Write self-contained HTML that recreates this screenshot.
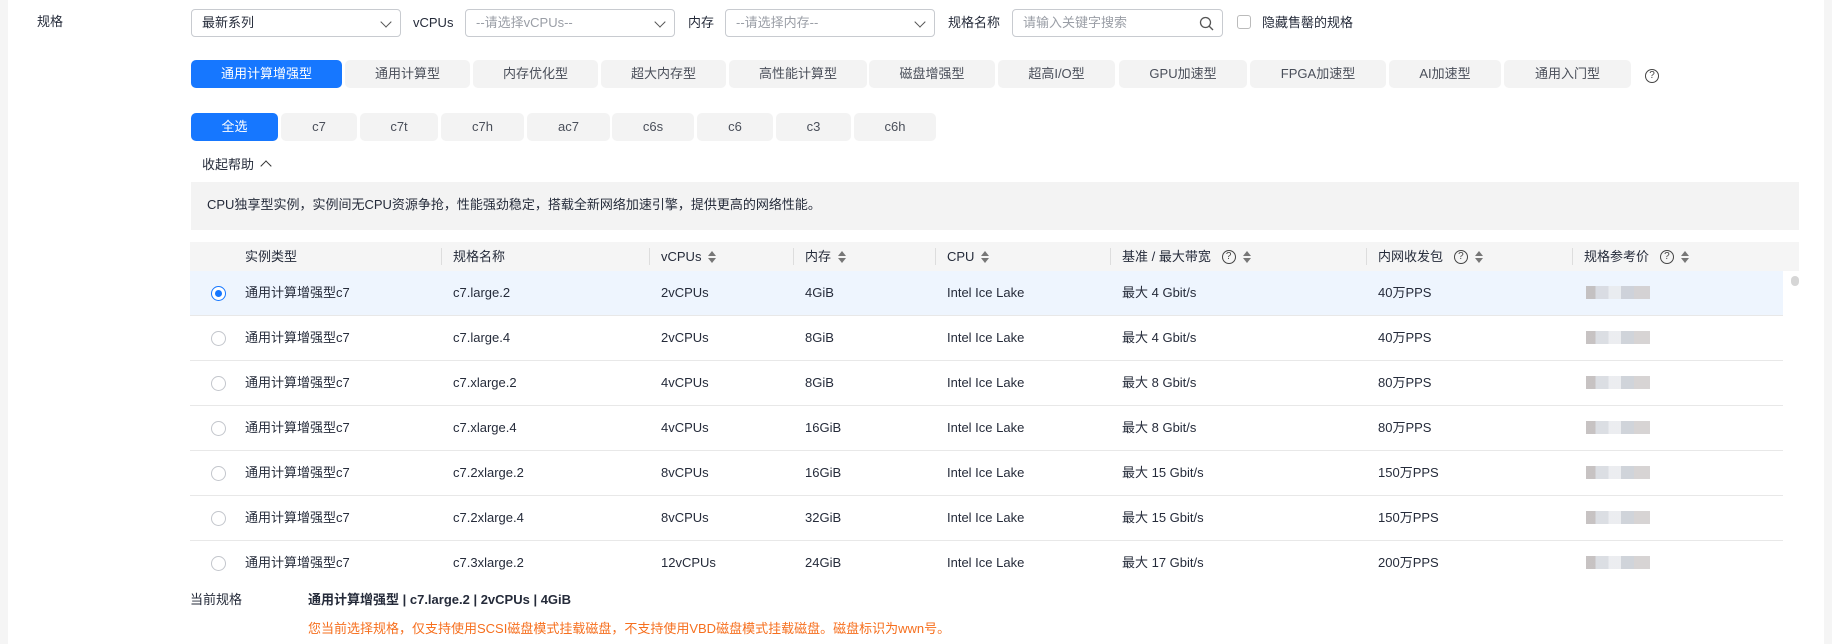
<!DOCTYPE html>
<html><head><meta charset="utf-8"><style>
*{box-sizing:border-box;margin:0;padding:0}
body{width:1832px;height:644px;overflow:hidden;background:#fff;font-family:"Liberation Sans","Noto Sans CJK SC",sans-serif;font-size:13px;line-height:16px;color:#252b3a;position:relative}
.a{position:absolute;white-space:nowrap;line-height:16px}
.sel{position:absolute;top:9px;height:28px;border:1px solid #c8cbd0;border-radius:4px;padding:0 10px;line-height:26px;color:#252b3a}
.sel.ph{color:#9a9ea6}
.chev{position:absolute;right:10px;top:8px;width:8px;height:8px;border-right:1.3px solid #555;border-bottom:1.3px solid #555;transform:rotate(45deg)}
.tab{position:absolute;top:60px;height:28px;background:#f3f3f3;border-radius:5px;text-align:center;line-height:28px;color:#4a4f5a}
.tab.on{background:#1677ff;color:#fff}
.st{position:absolute;top:113px;height:28px;background:#f3f3f3;border-radius:5px;text-align:center;line-height:28px;color:#4a4f5a}
.st.on{background:#1677ff;color:#fff}
.q{display:inline-block;width:14px;height:14px;border:1.3px solid #444;border-radius:50%;font-size:10px;line-height:12px;text-align:center;vertical-align:middle;color:#444}
.so{display:inline-block;vertical-align:middle;margin-left:6px;width:9px;height:14px;position:relative}
.so:before{content:"";position:absolute;left:1px;top:1px;border-left:4px solid transparent;border-right:4px solid transparent;border-bottom:5px solid #777}
.so:after{content:"";position:absolute;left:1px;top:8px;border-left:4px solid transparent;border-right:4px solid transparent;border-top:5px solid #777}
.row{position:absolute;left:190px;width:1593px;height:45px;border-bottom:1px solid #e8e8e8}
.rad{position:absolute;left:211px;width:15px;height:15px;border:1px solid #c3c6cc;border-radius:50%;background:#fff}
.rad.on{border:1.5px solid #1677ff}
.rad.on:after{content:"";position:absolute;left:2.5px;top:2.5px;width:7px;height:7px;border-radius:50%;background:#1677ff}
.hd{position:absolute;top:242px;left:190px;width:1609px;height:29px;background:#f5f5f5}
.dv{position:absolute;top:248px;width:1px;height:17px;background:#ddd}
.blur{position:absolute;left:1586px;width:64px;height:13px;background:linear-gradient(90deg,#bdb8b8 0 15%,#d5d8de 15% 35%,#e8eaee 35% 55%,#c8ccd4 55% 75%,#d0cccc 75% 100%);opacity:.85}
.h{top:249px;display:flex;align-items:center;height:16px}
</style></head><body>
<div class="a" style="left:0;top:0;width:8px;height:644px;background:#f5f5f5"></div>
<div class="a" style="left:1824px;top:0;width:8px;height:644px;background:#f5f5f5"></div>
<div class="a" style="left:37px;top:14px">规格</div>
<div class="sel" style="left:191px;width:210px">最新系列<i class="chev"></i></div>
<div class="a" style="left:413px;top:15px">vCPUs</div>
<div class="sel ph" style="left:465px;width:210px">--请选择vCPUs--<i class="chev"></i></div>
<div class="a" style="left:688px;top:15px">内存</div>
<div class="sel ph" style="left:725px;width:210px">--请选择内存--<i class="chev"></i></div>
<div class="a" style="left:948px;top:15px">规格名称</div>
<div class="sel ph" style="left:1012px;width:211px">请输入关键字搜索
<svg style="position:absolute;right:8px;top:6px" width="15" height="15" viewBox="0 0 15 15"><circle cx="6.5" cy="6.5" r="5" fill="none" stroke="#555" stroke-width="1.3"/><path d="M10 10l4 4" stroke="#555" stroke-width="1.3"/></svg></div>
<div class="a" style="left:1237px;top:15px;width:14px;height:14px;border:1px solid #bbb;border-radius:3px"></div>
<div class="a" style="left:1262px;top:15px">隐藏售罄的规格</div>

<div class="tab on" style="left:191px;width:151px">通用计算增强型</div>
<div class="tab" style="left:345px;width:125px">通用计算型</div>
<div class="tab" style="left:473px;width:125px">内存优化型</div>
<div class="tab" style="left:601px;width:125px">超大内存型</div>
<div class="tab" style="left:729px;width:138px">高性能计算型</div>
<div class="tab" style="left:869px;width:126px">磁盘增强型</div>
<div class="tab" style="left:998px;width:117px">超高I/O型</div>
<div class="tab" style="left:1119px;width:128px">GPU加速型</div>
<div class="tab" style="left:1250px;width:136px">FPGA加速型</div>
<div class="tab" style="left:1389px;width:112px">AI加速型</div>
<div class="tab" style="left:1504px;width:127px">通用入门型</div>
<div class="a" style="left:1645px;top:67px"><span class="q">?</span></div>

<div class="st on" style="left:191px;width:87px">全选</div>
<div class="st" style="left:281px;width:76px">c7</div>
<div class="st" style="left:360px;width:78px">c7t</div>
<div class="st" style="left:441px;width:83px">c7h</div>
<div class="st" style="left:527px;width:83px">ac7</div>
<div class="st" style="left:612px;width:82px">c6s</div>
<div class="st" style="left:697px;width:76px">c6</div>
<div class="st" style="left:776px;width:75px">c3</div>
<div class="st" style="left:854px;width:82px">c6h</div>

<div class="a" style="left:202px;top:157px">收起帮助 <span style="display:inline-block;width:8px;height:8px;border-left:1.5px solid #333;border-top:1.5px solid #333;transform:rotate(45deg);margin-left:4px;position:relative;top:1px"></span></div>
<div class="a" style="left:191px;top:182px;width:1608px;height:48px;background:#f3f3f3"></div>
<div class="a" style="left:207px;top:197px">CPU独享型实例，实例间无CPU资源争抢，性能强劲稳定，搭载全新网络加速引擎，提供更高的网络性能。</div>

<div class="hd"></div>
<div class="a h" style="left:245px">实例类型</div>
<div class="dv" style="left:441px"></div>
<div class="a h" style="left:453px">规格名称</div>
<div class="dv" style="left:649px"></div>
<div class="a h" style="left:661px">vCPUs<span class="so"></span></div>
<div class="dv" style="left:793px"></div>
<div class="a h" style="left:805px">内存<span class="so"></span></div>
<div class="dv" style="left:935px"></div>
<div class="a h" style="left:947px">CPU<span class="so"></span></div>
<div class="dv" style="left:1110px"></div>
<div class="a h" style="left:1122px">基准 / 最大带宽&nbsp;&nbsp;&nbsp;<span class="q">?</span><span class="so"></span></div>
<div class="dv" style="left:1366px"></div>
<div class="a h" style="left:1378px">内网收发包&nbsp;&nbsp;&nbsp;<span class="q">?</span><span class="so"></span></div>
<div class="dv" style="left:1572px"></div>
<div class="a h" style="left:1584px">规格参考价&nbsp;&nbsp;&nbsp;<span class="q">?</span><span class="so"></span></div>
<div class="a" style="left:1791px;top:276px;width:8px;height:10px;border-radius:4px;background:#d6d6d6"></div>

<div class="row" style="top:271px;background:#eef5fe"></div>
<div class="row" style="top:316px"></div>
<div class="row" style="top:361px"></div>
<div class="row" style="top:406px"></div>
<div class="row" style="top:451px"></div>
<div class="row" style="top:496px"></div>
<div class="row" style="top:541px;border-bottom:none"></div>

<div class="rad on" style="top:286px"></div>
<div class="rad" style="top:331px"></div>
<div class="rad" style="top:376px"></div>
<div class="rad" style="top:421px"></div>
<div class="rad" style="top:466px"></div>
<div class="rad" style="top:511px"></div>
<div class="rad" style="top:556px"></div>

<div class="a" style="left:245px;top:285px">通用计算增强型c7</div>
<div class="a" style="left:245px;top:330px">通用计算增强型c7</div>
<div class="a" style="left:245px;top:375px">通用计算增强型c7</div>
<div class="a" style="left:245px;top:420px">通用计算增强型c7</div>
<div class="a" style="left:245px;top:465px">通用计算增强型c7</div>
<div class="a" style="left:245px;top:510px">通用计算增强型c7</div>
<div class="a" style="left:245px;top:555px">通用计算增强型c7</div>

<div class="a" style="left:453px;top:285px">c7.large.2</div>
<div class="a" style="left:453px;top:330px">c7.large.4</div>
<div class="a" style="left:453px;top:375px">c7.xlarge.2</div>
<div class="a" style="left:453px;top:420px">c7.xlarge.4</div>
<div class="a" style="left:453px;top:465px">c7.2xlarge.2</div>
<div class="a" style="left:453px;top:510px">c7.2xlarge.4</div>
<div class="a" style="left:453px;top:555px">c7.3xlarge.2</div>

<div class="a" style="left:661px;top:285px">2vCPUs</div>
<div class="a" style="left:661px;top:330px">2vCPUs</div>
<div class="a" style="left:661px;top:375px">4vCPUs</div>
<div class="a" style="left:661px;top:420px">4vCPUs</div>
<div class="a" style="left:661px;top:465px">8vCPUs</div>
<div class="a" style="left:661px;top:510px">8vCPUs</div>
<div class="a" style="left:661px;top:555px">12vCPUs</div>

<div class="a" style="left:805px;top:285px">4GiB</div>
<div class="a" style="left:805px;top:330px">8GiB</div>
<div class="a" style="left:805px;top:375px">8GiB</div>
<div class="a" style="left:805px;top:420px">16GiB</div>
<div class="a" style="left:805px;top:465px">16GiB</div>
<div class="a" style="left:805px;top:510px">32GiB</div>
<div class="a" style="left:805px;top:555px">24GiB</div>

<div class="a" style="left:947px;top:285px">Intel Ice Lake</div>
<div class="a" style="left:947px;top:330px">Intel Ice Lake</div>
<div class="a" style="left:947px;top:375px">Intel Ice Lake</div>
<div class="a" style="left:947px;top:420px">Intel Ice Lake</div>
<div class="a" style="left:947px;top:465px">Intel Ice Lake</div>
<div class="a" style="left:947px;top:510px">Intel Ice Lake</div>
<div class="a" style="left:947px;top:555px">Intel Ice Lake</div>

<div class="a" style="left:1122px;top:285px">最大 4 Gbit/s</div>
<div class="a" style="left:1122px;top:330px">最大 4 Gbit/s</div>
<div class="a" style="left:1122px;top:375px">最大 8 Gbit/s</div>
<div class="a" style="left:1122px;top:420px">最大 8 Gbit/s</div>
<div class="a" style="left:1122px;top:465px">最大 15 Gbit/s</div>
<div class="a" style="left:1122px;top:510px">最大 15 Gbit/s</div>
<div class="a" style="left:1122px;top:555px">最大 17 Gbit/s</div>

<div class="a" style="left:1378px;top:285px">40万PPS</div>
<div class="a" style="left:1378px;top:330px">40万PPS</div>
<div class="a" style="left:1378px;top:375px">80万PPS</div>
<div class="a" style="left:1378px;top:420px">80万PPS</div>
<div class="a" style="left:1378px;top:465px">150万PPS</div>
<div class="a" style="left:1378px;top:510px">150万PPS</div>
<div class="a" style="left:1378px;top:555px">200万PPS</div>

<div class="blur" style="top:286px"></div>
<div class="blur" style="top:331px"></div>
<div class="blur" style="top:376px"></div>
<div class="blur" style="top:421px"></div>
<div class="blur" style="top:466px"></div>
<div class="blur" style="top:511px"></div>
<div class="blur" style="top:556px"></div>

<div class="a" style="left:190px;top:592px">当前规格</div>
<div class="a" style="left:308px;top:592px;font-weight:bold">通用计算增强型 | c7.large.2 | 2vCPUs | 4GiB</div>
<div class="a" style="left:308px;top:621px;color:#f66f1e">您当前选择规格，仅支持使用SCSI磁盘模式挂载磁盘，不支持使用VBD磁盘模式挂载磁盘。磁盘标识为wwn号。</div>
</body></html>
